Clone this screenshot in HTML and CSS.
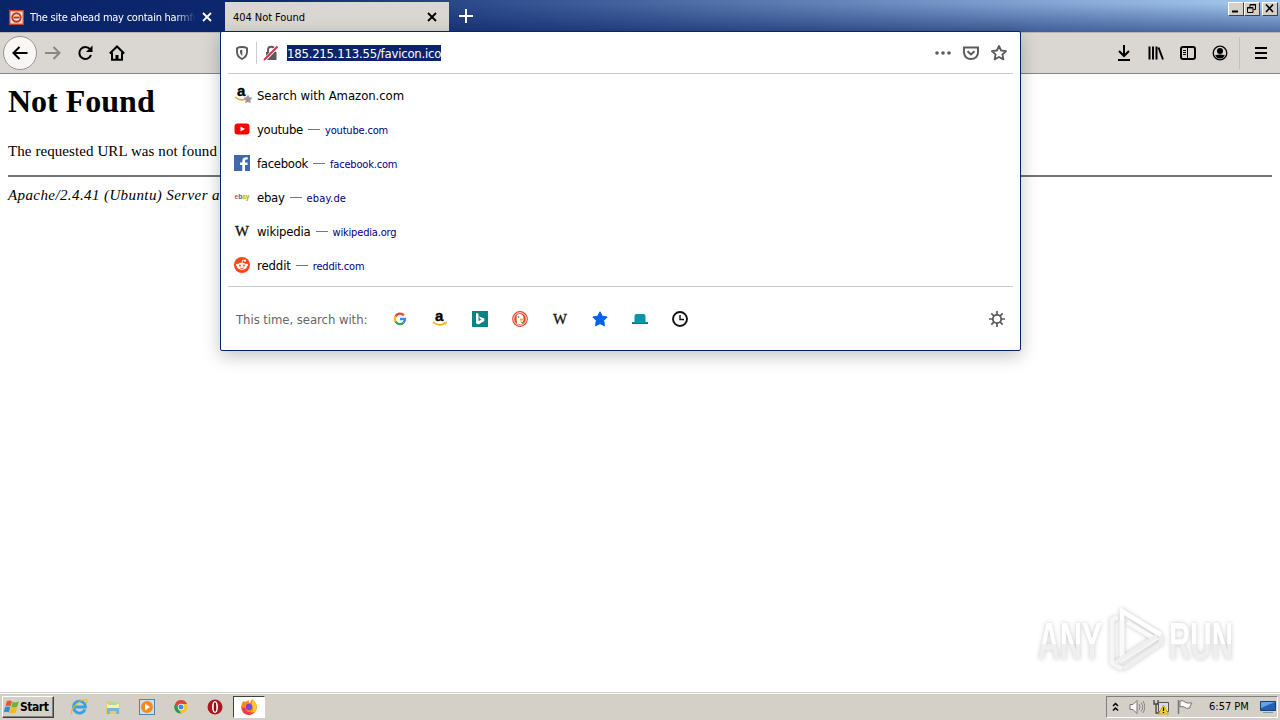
FILE: index.html
```html
<!DOCTYPE html>
<html lang="en">
<head>
  <meta charset="UTF-8" />
  <title>404 Not Found</title>
  <link rel="stylesheet" href="styles.css">
</head>
<body>

  <svg class="defs" width="0" height="0">
    <symbol id="close" viewBox="0 0 12 12"><path d="M2 2l8 8M10 2l-8 8" fill="none" stroke="currentColor" stroke-width="1.8"/></symbol>
    <symbol id="amazon" viewBox="0 0 16 16">
      <text x="3" y="10" font-family="Liberation Sans" font-weight="bold" font-size="15" fill="#000" stroke="#000" stroke-width=".4">a</text>
      <path d="M1 11q6 5 12 1.2" fill="none" stroke="#f5a623" stroke-width="1.6"/>
      <path d="M11.5 11.2h3l-1 2.5" fill="none" stroke="#f5a623" stroke-width="1"/>
    </symbol>
    <symbol id="wiki" viewBox="0 0 16 16"><text x="1" y="13" font-family="Liberation Serif" font-size="14.5" fill="#111" stroke="#111" stroke-width=".3" textLength="14" lengthAdjust="spacingAndGlyphs">W</text></symbol>
    <symbol id="star" viewBox="0 0 16 16"><path d="M8 .8l2.3 4.4 4.9.8-3.5 3.500.8 5.300L8 12.600l-4.500 2.200.8-5.300L.8 6l4.900-.8z" stroke="inherit" stroke-linejoin="round"/></symbol>
  </svg>

  <div class="window">
    <div class="tabbar">
      <div class="tab">
        <svg class="favicon" viewBox="0 0 16 16"><path d="M0 0h16v16H0z" fill="#c5432c"/><path d="M1.500 1.500h13v13h-13z" fill="#f3dcd5"/><circle cx="8" cy="8" r="4.500" fill="#f3dcd5" stroke="#bf351e" stroke-width="2"/><path d="M5 8h6" stroke="#bf351e" stroke-width="2"/></svg>
        <span class="tab-title fade">The site ahead may contain harmful</span>
        <svg class="tab-close"><use href="#close"/></svg>
      </div>
      <div class="tab active">
        <span class="tab-title">404 Not Found</span>
        <svg class="tab-close"><use href="#close"/></svg>
      </div>
      <svg class="new-tab" viewBox="0 0 14 14"><path d="M7 0v14M0 7h14" stroke="#fff" stroke-width="2"/></svg>
      <div class="controls">
        <span class="control"><svg viewBox="0 0 13 11"><path d="M3 8.500h6" stroke="#000" stroke-width="2"/></svg></span>
        <span class="control"><svg viewBox="0 0 13 11"><path d="M5 4V1.500h5.500v5H8.500M5 2h6M2.500 4.500H8V9.500H2.500zM2 5h6" fill="none" stroke="#000"/></svg></span>
        <span class="control last"><svg viewBox="0 0 13 11"><path d="M3 1.500l7 7.500M10 1.500L3 9" stroke="#000" stroke-width="1.600"/></svg></span>
      </div>
    </div>

    <div class="toolbar">
      <div class="nav">
        <span class="back"><svg viewBox="0 0 16 16"><path d="M15.500 8H1.500M7.500 2L1.500 8l6 6" class="line"/></svg></span>
        <svg class="icon dim" viewBox="0 0 16 16"><path d="M0 8h14.500M8.500 2l6 6-6 6" class="line"/></svg>
        <svg class="icon" viewBox="0 0 16 16"><path d="M13 4.200A6 6 0 1 0 14 10" class="line"/><path d="M15.500 .5v6.500H9z"/></svg>
        <svg class="icon" viewBox="0 0 16 16"><path d="M.8 8.500L8 1.500l7.200 7M3 7.500v7.200h10V7.500" class="line"/><path d="M6.500 15v-5h3v5z"/></svg>
      </div>
      <div class="tools">
        <svg class="icon" viewBox="0 0 16 16"><path d="M8 0v11M3 6l5 5 5-5M2 15h12" class="line"/></svg>
        <svg class="icon" viewBox="0 0 16 16"><path d="M1.500 1.500v13M5 1.500v13M8.500 1.500v13M10.500 2.500l4.500 12" class="line"/></svg>
        <svg class="icon" viewBox="0 0 16 16"><rect x="1" y="2" width="14" height="12" rx="2" class="line"/><path d="M7.500 2v12" stroke="#000"/><path d="M3 5.500h3M3 7.500h3M3 9.500h3" stroke="#000"/></svg>
        <svg class="icon" viewBox="0 0 16 16"><circle cx="8" cy="8" r="6.800" fill="none" stroke="#000" stroke-width="1.300"/><circle cx="8" cy="6" r="3"/><path d="M3 10.500q5-2 10 0Q11 13.500 8 13.500T3 10.500z"/></svg>
        <span class="menu"><svg class="icon" viewBox="0 0 16 16"><path d="M2 3h12M2 8h12M2 13h12" class="line"/></svg></span>
      </div>
    </div>

    <div class="page">
      <h1>Not Found</h1>
      <p>The requested URL was not found on this server.</p>
      <hr>
      <address>Apache/2.4.41 (Ubuntu) Server at 185.215.113.55 Port 80</address>
    </div>

    <div class="taskbar">
      <div class="start">
        <svg viewBox="0 0 18 16"><path d="M4 2q3-2 5.500 0L8 7.500q-3-2-5.500 0z" fill="#e8562a"/><path d="M10.300 2.500q3 1.500 6.500-.5L15.300 7.500q-3 2-6.500.5z" fill="#6bb52d"/><path d="M2.200 8.200q3-1.500 5.500 0l-1.500 5.500q-3-1.500-5.500 0z" fill="#318bd8"/><path d="M8.500 8.800q3 1.500 6.500-.5l-1.500 5.500q-3 2-6.500.5z" fill="#f6b81a"/></svg>
        <span>Start</span>
      </div>
      <div class="launch">
        <svg viewBox="0 0 18 18"><path d="M15 11.500A6 6 0 1 1 15.500 9H5" fill="none" stroke="#35a3df" stroke-width="2.800"/><path d="M2 16C-1 12 10 1 16 1.500q2 1 0 4" fill="none" stroke="#e8b832" stroke-width="1.200"/></svg>
        <svg viewBox="0 0 18 18"><path d="M2 3h5l1 2h8v11H2z" fill="#eacb68"/><path d="M3 6h12v6H3z" fill="#fbefa9"/><path d="M4 4h9v3H4z" fill="#b3dc8e"/><path d="M3 16V10h12v6h-3v-3H6v3z" fill="#73b8dc"/></svg>
        <svg viewBox="0 0 18 18"><rect x="1.500" y="1.500" width="15" height="15" fill="#c8e1f2" stroke="#4986b8"/><circle cx="9" cy="9" r="6" fill="#f18a1a"/><path d="M7 5.500l5 3.500-5 3.500z" fill="#fff"/></svg>
        <svg viewBox="0 0 18 18"><circle cx="9" cy="9" r="6.500" fill="#f3c623"/><path d="M3.300 5.500A6.500 6.500 0 0 1 15 6H9L6 10z" fill="#db4437"/><path d="M3.300 5.500L7 12l2 3.500A6.500 6.500 0 0 1 3.300 5.500z" fill="#249b57"/><circle cx="9" cy="9" r="3.200" fill="#fff"/><circle cx="9" cy="9" r="2.500" fill="#4285f4"/></svg>
        <svg viewBox="0 0 18 18"><circle cx="9" cy="9" r="7.500" fill="#b0171d"/><ellipse cx="9" cy="9" rx="3" ry="6" fill="#fff"/><ellipse cx="9" cy="9" rx="1.300" ry="4.800" fill="#8a1015"/></svg>
        <div class="running">
          <svg viewBox="0 0 18 18"><path d="M2 5l2-2 1 1 4-2q-1 2 1 3l2-4q4 3 5 7 0 8-8 9-8-1-8-8z" fill="#ff8a16"/><path d="M12 1q5 4 4.500 8.500Q16 15 10 16q5-4 2-9z" fill="#ffca2c"/><path d="M2 9q0 7 7 8 4-.5 6-3-8 2-10-4z" fill="#ee3755"/><circle cx="9" cy="9" r="3.200" fill="#7549d8"/></svg>
        </div>
      </div>
      <div class="tray">
        <svg class="chevron" viewBox="0 0 7 10"><path d="M1 4l2.500-2.500L6 4M1 8.500L3.500 6 6 8.500" fill="none" stroke="#000" stroke-width="1.500"/></svg>
        <svg class="tray-icon" viewBox="0 0 16 16"><path d="M1 5.500h3L8 1.500v13l-4-4H1z" fill="#f8f8f8" stroke="#777"/><path d="M10 5q2 3 0 6M12 3.500q3.500 4.500 0 9M14 2q3.500 6 0 12" fill="none" stroke="#888"/></svg>
        <svg class="tray-icon" viewBox="0 0 16 16"><path d="M5.500 3.500h10v9h-10z" fill="#ddd" stroke="#555"/><path d="M1 1v4h4V1M3 5v9h5" fill="none" stroke="#444" stroke-width="1.300"/><path d="M10.500 6l5 9h-10z" fill="#ffd324" stroke="#b18a00" stroke-width=".6"/><path d="M10.500 8.500v3.500M10.500 13v1" stroke="#000" stroke-width="1.300"/></svg>
        <svg class="tray-icon" viewBox="0 0 16 16"><path d="M1.500 1v14" stroke="#777" stroke-width="1.500"/><path d="M3 2q3-1 5 1l2 1h5l-2 3 0 2q-4 1-6-1-2-1-4 0z" fill="#fafafa" stroke="#777"/></svg>
        <span class="clock">6:57 PM</span>
        <svg class="desktop" viewBox="0 0 16 14"><path d="M.5 1.500h15v9H.5z" fill="#2260b4" stroke="#183e78"/><path d="M1 2h14L1 8z" fill="#61a5e4"/><path d="M3 12.500h10" stroke="#7f98b2"/></svg>
      </div>
    </div>

    <!-- open address bar -->
    <div class="urlbar">
      <div class="url-input">
        <svg class="shield" viewBox="0 0 16 16"><path d="M8 2Q5 2 3 3.200V7q0 4.500 5 7 5-2.500 5-7V3.200Q11 2 8 2z" fill="none" stroke="#5a5a5a" stroke-width="1.900"/><path d="M8.300 4.800v6.200q-2.300-1.500-2.300-4V5.200z" fill="#5a5a5a"/></svg>
        <span class="sep"></span>
        <svg class="lock" viewBox="0 0 16 16"><path d="M3 7h10.500v8H3z" fill="#5a5a5a"/><path d="M5 7.500V5q0-3.300 3.200-3.300T11.500 5v2.500" fill="none" stroke="#5a5a5a" stroke-width="2"/><path d="M1.500 15L14.500 1.500" stroke="#fff" stroke-width="3.500"/><path d="M1 15L14.500 1.500" stroke="#e22850" stroke-width="2"/></svg>
        <span class="url">185.215.113.55/favicon.ico</span>
        <div class="actions">
          <svg viewBox="0 0 16 16"><circle cx="2" cy="8" r="1.800"/><circle cx="8" cy="8" r="1.800"/><circle cx="14" cy="8" r="1.800"/></svg>
          <svg viewBox="0 0 16 16"><path d="M1 2.500h14V8q-1 6-7 6T1 8z" fill="none" stroke="#5a5a5a" stroke-width="1.900"/><path d="M4.500 6.300L8 9.500l3.500-3.200" fill="none" stroke="#5a5a5a" stroke-width="2"/></svg>
          <svg viewBox="0 0 16 16"><path d="M8 1l2.100 4.500 5 .6-3.700 3.300 1 5L8 12l-4.400 2.400 1-5L.9 6.100l5-.6z" fill="none" stroke="#5a5a5a" stroke-width="1.800" stroke-linejoin="round"/></svg>
        </div>
      </div>
      <div class="results">
        <div class="row">
          <svg class="amazon-star" viewBox="0 0 19 18"><use href="#amazon" width="16" height="16"/><use href="#star" x="9" y="8" width="10" height="10" fill="#999"/></svg>
          <span class="name amazon-name">Search with Amazon.com</span>
        </div>
        <div class="row">
          <svg viewBox="0 0 16 16"><rect x=".5" y="2.500" width="15" height="11" rx="3" fill="#f00"/><path d="M6.500 5.500v5L11 8z" fill="#fff"/></svg>
          <span class="name">youtube</span><span class="dash"></span><span class="link">youtube.com</span>
        </div>
        <div class="row">
          <svg viewBox="0 0 16 16"><path d="M0 0h16v16H0z" fill="#4267b2"/><path d="M11 16V10h2.500V7.500H11V6q0-1.500 1.500-1.500h1.200V2.300Q8.300 1.500 8.300 6v1.500H6V10h2.300v6z" fill="#fff"/></svg>
          <span class="name">facebook</span><span class="dash"></span><span class="link">facebook.com</span>
        </div>
        <div class="row">
          <svg viewBox="0 0 16 16"><text x=".5" y="9.500" font-family="Liberation Sans" font-size="7.500" font-weight="bold" textLength="15" lengthAdjust="spacingAndGlyphs"><tspan fill="#c0506a">e</tspan><tspan fill="#3c60ac">b</tspan><tspan fill="#e1a926">a</tspan><tspan fill="#8eae25">y</tspan></text></svg>
          <span class="name">ebay</span><span class="dash"></span><span class="link ebay-link">ebay.de</span>
        </div>
        <div class="row">
          <svg><use href="#wiki"/></svg>
          <span class="name wiki-name">wikipedia</span><span class="dash"></span><span class="link">wikipedia.org</span>
        </div>
        <div class="row">
          <svg viewBox="0 0 16 16"><circle cx="8" cy="8" r="8" fill="#f84818"/><ellipse cx="8" cy="9.300" rx="5" ry="3.600" fill="#fff"/><circle cx="3.300" cy="8" r="1.300" fill="#fff"/><circle cx="12.700" cy="8" r="1.300" fill="#fff"/><circle cx="11" cy="3.700" r="1.100" fill="#fff"/><path d="M8 6l.7-3 2.300.6" fill="none" stroke="#fff" stroke-width=".8"/><circle cx="6" cy="8.600" r="1" fill="#f84818"/><circle cx="10" cy="8.600" r="1" fill="#f84818"/><path d="M6 11q2 1.200 4 0" fill="none" stroke="#f84818" stroke-width=".8"/></svg>
          <span class="name reddit-name">reddit</span><span class="dash"></span><span class="link">reddit.com</span>
        </div>
      </div>
      <div class="engines">
        <span class="engines-label">This time, search with:</span>
        <div class="engine-list">
          <svg viewBox="0 0 16 16"><g fill="none" stroke-width="2.300"><path d="M3.500 5.500A5 5 0 0 1 11.800 4.400" stroke="#ea4335"/><path d="M3.500 10.500A5 5 0 0 1 3.500 5.500" stroke="#fbbc05"/><path d="M11.500 11.600A5 5 0 0 1 3.500 10.500" stroke="#34a853"/><path d="M8 8h5A5 5 0 0 1 11.500 11.600" stroke="#4285f4"/></g></svg>
          <svg><use href="#amazon"/></svg>
          <svg viewBox="0 0 16 16"><path d="M0 0h16v16H0z" fill="#0c8484"/><path d="M4 2l2.500.8v7.500l3-1.700-1.500-.7-.9-2.300 5.200 1.900V10L6.500 13.500 4 12.300z" fill="#fff"/></svg>
          <svg viewBox="0 0 16 16"><circle cx="8" cy="8" r="7.900" fill="#dc4528"/><circle cx="8" cy="8" r="6.300" fill="none" stroke="#fff" stroke-width=".9"/><path d="M5 13L4.500 6q0-3 3-3 4 0 4 4v2l-1 4.500z" fill="#fff"/><path d="M8 7.500l4 .3-1 1.700-3 .2z" fill="#f6b71c"/><path d="M8.500 10.500l3.500.5-1.500 2.500z" fill="#56a846"/><circle cx="6.500" cy="6" r=".8" fill="#285070"/></svg>
          <svg><use href="#wiki"/></svg>
          <svg fill="#0060f0" stroke="#0060f0"><use href="#star"/></svg>
          <svg viewBox="0 0 16 16"><path d="M2.500 11V5q0-2 2-2h7q2 0 2 2v6H16v2H0v-2z" fill="#0895aa"/><path d="M0 12h16v1H0z" fill="#087080"/></svg>
          <svg viewBox="0 0 16 16"><circle cx="8" cy="8" r="7" fill="none" stroke="#111" stroke-width="1.900"/><path d="M8 4v4.500h4" fill="none" stroke="#111" stroke-width="1.400"/></svg>
        </div>
        <svg class="gear" viewBox="0 0 16 16"><g fill="none" stroke="#5a5a5a"><circle cx="8" cy="8" r="4.200" stroke-width="1.800"/><path d="M8 0v4M8 12v4M0 8h4M12 8h4M2.300 2.300L5.300 5.300M10.700 10.700l3 3M13.700 2.300l-3 3M5.300 10.700l-3 3" stroke-width="1.700"/></g></svg>
      </div>
    </div>

    <svg class="watermark" viewBox="0 0 210 70">
      <defs>
        <linearGradient id="wm" x1="0" y1="0" x2="0" y2="1"><stop offset=".55" stop-color="#fff"/><stop offset=".55" stop-color="#efefef"/></linearGradient>
      </defs>
      <g fill="url(#wm)" font-family="Liberation Sans" font-weight="bold" font-size="51">
        <text x="7" y="53" textLength="64" lengthAdjust="spacingAndGlyphs">ANY</text>
        <text x="138" y="53" textLength="64" lengthAdjust="spacingAndGlyphs">RUN</text>
      </g>
      <g fill="none" stroke-width="4.500">
        <path d="M87 11l-6 3v43l10 6" stroke="#f6f6f6"/>
        <path d="M91 49V5l39 24" stroke="#fff"/>
        <path d="M91 14v40l33-21-28-17" stroke="#fafafa"/>
        <path d="M130 30v7L92 63M84 57l42-27" stroke="#efefef"/>
      </g>
    </svg>
  </div>

</body>
</html>
```
FILE: styles.css
```css
* {
  box-sizing: border-box;
}
body {
  margin: 0;
  background: #fff;
  font-family: "DejaVu Sans Condensed", "DejaVu Sans", sans-serif;
  font-stretch: condensed;
  color: #000;
}
svg {
  display: block;
  flex: none;
}
.defs {
  position: absolute;
}
.line {
  fill: none;
  stroke: currentColor;
  stroke-width: 2;
}
.window {
  position: relative;
  width: 1280px;
  height: 720px;
  overflow: hidden;
  display: flex;
  flex-direction: column;
}

/* tabs */
.tabbar {
  height: 32px;
  flex: none;
  display: flex;
  background: linear-gradient(rgba(0,0,0,0) 10%, rgba(10,36,106,.55)), linear-gradient(90deg, #0a246a, #0d286f 20%, #a6caf0);
}
.tab {
  width: 225px;
  padding: 2px 12px 0 9px;
  display: flex;
  align-items: center;
  color: #fff;
  font-size: 11px;
}
.tab.active {
  width: 224px;
  margin-top: 2px;
  padding: 0 11px 0 8px;
  background: #dad6d1;
  color: #000;
}
.favicon {
  width: 15px;
  height: 15px;
  margin-right: 6px;
}
.tab-title {
  flex: 1;
  overflow: hidden;
  white-space: nowrap;
  letter-spacing: -0.24px;
}
.active .tab-title {
  letter-spacing: -0.05px;
}
.fade {
  -webkit-mask-image: linear-gradient(90deg, #000 145px, transparent 166px);
  mask-image: linear-gradient(90deg, #000 145px, transparent 166px);
}
.tab-close {
  width: 12px;
  height: 12px;
  margin-left: 4px;
}
.new-tab {
  width: 14px;
  height: 14px;
  margin: 9px 0 0 10px;
}
.controls {
  margin: 2px 2px 0 auto;
  display: flex;
}
.control {
  width: 16px;
  height: 14px;
  background: #d4d0c8;
  border: 1px solid;
  border-color: #fff #404040 #404040 #fff;
}
.control svg {
  width: 13px;
  height: 11px;
}
.control.last {
  margin-left: 2px;
}

/* toolbar */
.toolbar {
  height: 42px;
  flex: none;
  display: flex;
  justify-content: space-between;
  background: #dad6d1;
  border-top: 1px solid #b8b5b4;
  border-bottom: 1px solid #858585;
}
.nav, .tools {
  display: flex;
  align-items: center;
  gap: 16px;
}
.nav {
  padding-left: 3px;
}
.icon {
  width: 16px;
  height: 16px;
}
.back {
  width: 34px;
  height: 34px;
  margin-right: -8px;
  display: flex;
  align-items: center;
  justify-content: center;
  border: 1px solid #989694;
  border-radius: 50%;
  background: #f8f7f6;
}
.back svg {
  width: 16px;
  height: 16px;
}
.dim {
  color: #898783;
}
.menu {
  height: 32px;
  margin-left: -5px;
  padding: 8px 11px 0 13px;
  border-left: 1px solid #c4c0bb;
}

/* page */
.page {
  flex: 1;
  padding: 0 8px;
  font-family: "Liberation Serif", serif;
  font-size: 15px;
}
.page h1 {
  margin: 9px 0 21px;
  font-size: 32px;
  line-height: 37px;
}
.page p {
  margin: 0;
  line-height: 20px;
  letter-spacing: 0.08px;
}
.page hr {
  margin: 14px 0 8px;
  border: 0;
  border-top: 2px solid #737373;
}
.page address {
  line-height: 20px;
  letter-spacing: 0.4px;
}

/* address bar popup */
.urlbar {
  position: absolute;
  left: 220px;
  top: 31px;
  width: 801px;
  height: 320px;
  padding: 0 7px;
  background: #fff;
  border: 1px solid #0a246a;
  border-radius: 2px;
  box-shadow: 0 5px 18px rgba(0,0,0,.24);
}
.url-input {
  height: 42px;
  display: flex;
  align-items: center;
  border-bottom: 1px solid #ccc;
  padding: 0 6px;
}
.url-input svg {
  width: 16px;
  height: 16px;
}
.sep {
  width: 1px;
  height: 22px;
  margin: 0 6px;
  background: #ccc;
}
.url {
  margin-left: 8px;
  height: 16px;
  line-height: 17px;
  font-size: 13px;
  letter-spacing: -0.22px;
  background: #0a246a;
  color: #fff;
}
.actions {
  margin-left: auto;
  display: flex;
  gap: 12px;
  fill: #5a5a5a;
}
.results {
  height: 213px;
  padding: 4px 6px 0;
  border-bottom: 1px solid #ccc;
}
.row {
  height: 34px;
  display: flex;
  align-items: center;
}
.row svg {
  width: 16px;
  height: 16px;
  margin-right: 7px;
}
.row .amazon-star {
  width: 19px;
  height: 18px;
  margin-right: 4px;
}
.name {
  font-size: 13px;
  letter-spacing: -0.3px;
}
.amazon-name {
  letter-spacing: -0.06px;
}
.wiki-name {
  letter-spacing: -0.2px;
}
.reddit-name {
  letter-spacing: -0.1px;
}
.dash {
  width: 12px;
  height: 1px;
  margin: 0 5px;
  background: #777;
}
.link {
  padding-top: 3px;
  color: #000080;
  font-size: 11px;
  letter-spacing: -0.18px;
}
.ebay-link {
  letter-spacing: 0.2px;
}
.engines {
  height: 64px;
  display: flex;
  align-items: center;
  padding: 0 8px;
}
.engines-label {
  width: 156px;
  white-space: nowrap;
  font-size: 13px;
  letter-spacing: -0.06px;
  color: #666;
}
.engine-list {
  display: flex;
  gap: 24px;
}
.engine-list svg, .gear {
  width: 16px;
  height: 16px;
}
.gear {
  margin-left: auto;
}

/* taskbar */
.taskbar {
  height: 28px;
  flex: none;
  display: flex;
  align-items: center;
  padding: 0 2px 0 2px;
  background: #d4d0c8;
  border-top: 1px solid #d4d0c8;
  box-shadow: inset 0 1px #fff;
}
.start {
  width: 52px;
  height: 22px;
  display: flex;
  align-items: center;
  border: 1px solid;
  border-color: #fff #404040 #404040 #fff;
  box-shadow: inset -1px -1px #808080;
  font-size: 12px;
  font-weight: bold;
  letter-spacing: -0.45px;
}
.start svg {
  width: 17px;
  height: 16px;
}
.launch {
  display: flex;
  align-items: center;
  margin-left: 16px;
  gap: 16px;
}
.launch svg {
  width: 18px;
  height: 18px;
}
.running {
  width: 32px;
  height: 22px;
  margin-left: -7px;
  padding: 1px 0 0 6px;
  background: #fff;
  border: 1px solid;
  border-color: #404040 #fff #fff #404040;
}
.tray {
  width: 172px;
  height: 22px;
  margin-left: auto;
  display: flex;
  align-items: center;
  padding-left: 5px;
  border: 1px solid;
  border-color: #808080 #fff #fff #808080;
}
.chevron {
  width: 7px;
  height: 10px;
  margin-right: 10px;
}
.tray-icon {
  width: 16px;
  height: 16px;
  margin-right: 8px;
}
.clock {
  width: 51px;
  margin-left: 8px;
  white-space: nowrap;
  font-size: 11px;
}
.desktop {
  width: 16px;
  height: 14px;
}

.watermark {
  position: absolute;
  left: 1031px;
  top: 606px;
  width: 210px;
  height: 70px;
  filter: drop-shadow(0 0 2px rgba(0,0,0,.22));
}
```
